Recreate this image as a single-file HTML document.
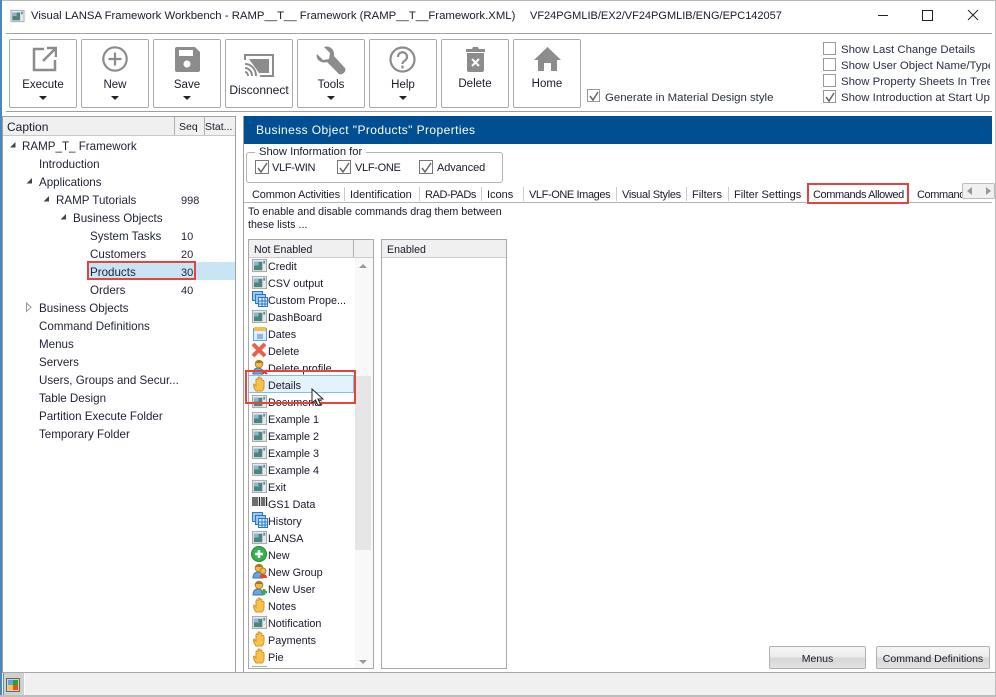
<!DOCTYPE html>
<html><head><meta charset="utf-8"><style>
html,body{margin:0;padding:0;background:#fff}
#w{position:relative;width:996px;height:697px;overflow:hidden;background:#fff;font:12px/16px "Liberation Sans",sans-serif;color:#1a1a2a}
#w div,#w svg{position:absolute}
.t{white-space:nowrap;height:16px}
.tr{font-size:11.600px;color:#1e2233;margin-top:1px}
.n{font-size:11px;color:#1e2233;margin-top:1px}
.tab{font-size:11px;top:187px;letter-spacing:-.4px}
#rows .t{font-size:10.800px;margin-top:1px}
.b{border:1px solid #a9a9a9;border-radius:2px;width:66px;height:67px;top:39px;background:#fff;text-align:center}
.b span{position:absolute;left:0;right:0;line-height:16px;font-size:11.500px}
.c{width:11px;height:11px;border:1px solid #777;background:#fff}
.ar{width:0;height:0;border-left:4px solid transparent;border-right:4px solid transparent;border-top:4px solid #222;left:29px;top:56px}
.red{border:2px solid #e5433d;box-sizing:border-box}
.sep{top:187px;width:1px;height:14px;background:#ccc}
.op{font-size:11.400px;color:#2a3040;margin-top:1px}
.vl{font-size:11px;letter-spacing:-.3px;margin-top:1px}
</style></head><body><div id="w">
<svg width="0" height="0" style="position:absolute"><defs>
<symbol id="doc" viewBox="0 0 16 16"><rect x=".5" y="1.5" width="15" height="13" fill="#e8e8e8" stroke="#a5a5a5"/><rect x="2" y="4" width="9" height="9" fill="#4b8580"/><rect x="2" y="4" width="5" height="4" fill="#8fb5d0"/><rect x="12" y="3" width="2" height="3" fill="#5b8fb0"/></symbol>
<symbol id="hand" viewBox="0 0 16 16"><path d="M4 15C2 12 1 9 2 8l2 2V4c0-1.500 1.500-1.500 2 0V2c0-1.500 2-1.500 2 0v1c.5-1.500 2-1.200 2 .3V5c.5-1 2-.8 2 .5V11c0 2-1 3-2 4z" fill="#f7c34a" stroke="#d89428"/></symbol>
<symbol id="win" viewBox="0 0 16 16"><rect x=".5" y=".5" width="10" height="9" fill="#9cc7ee" stroke="#2a78c8"/><rect x="3.500" y="3.500" width="10" height="9" fill="#9cc7ee" stroke="#2a78c8"/><rect x="6.500" y="6.500" width="9" height="9" fill="#dceeff" stroke="#2a78c8"/><path d="M7 10h8M7 13h8M10 7v8M13 7v8" stroke="#2a78c8"/></symbol>
<symbol id="user" viewBox="0 0 16 16"><path d="M1 15c0-4 2-6 5-6s5 2 5 6z" fill="#6aa6dc" stroke="#3a74ad"/><circle cx="7" cy="5" r="3.800" fill="#f1b94a" stroke="#b27c1f"/><path d="M3.500 4c1-3 6-3 7 0z" fill="#a8741f"/></symbol>
</defs></svg>

<div style="left:0;top:0;width:996px;height:1px;background:#b9b9b9"></div>
<div style="left:0;top:0;width:2px;height:697px;background:#4f86b8"></div>
<div style="left:995px;top:0;width:1px;height:697px;background:#bdbdbd"></div>
<div style="left:0;top:695px;width:996px;height:2px;background:#bdbdbd"></div>

<!-- title -->
<svg style="left:10px;top:9px" width="15" height="14"><use href="#doc" width="15" height="14"/></svg>
<div class="t" style="left:31px;top:8px;font-size:11.350px">Visual LANSA Framework Workbench - RAMP__T__ Framework (RAMP__T__Framework.XML)</div>
<div class="t" style="left:530px;top:8px;font-size:11px">VF24PGMLIB/EX2/VF24PGMLIB/ENG/EPC142057</div>
<div style="left:878px;top:15px;width:10px;height:1px;background:#222"></div>
<div style="left:922px;top:10px;width:9px;height:9px;border:1px solid #222"></div>
<svg style="left:967px;top:9px" width="12" height="12"><path d="M1 1l10 10M11 1L1 11" stroke="#222" fill="none"/></svg>
<div style="left:6px;top:33px;width:986px;height:1px;background:#a0a0a0"></div>
<div style="left:6px;top:111px;width:986px;height:1px;background:#a0a0a0"></div>

<!-- toolbar -->
<div class="b" style="left:9px"><span style="top:37px">Execute</span><div class="ar"></div>
<svg style="left:21px;top:6px" width="26" height="26" fill="none" stroke="#8c8c8c" stroke-width="2.500"><path d="M13 3H3v21h21V14M12 15L24 3M16 2h9v9"/></svg></div>
<div class="b" style="left:81px"><span style="top:37px">New</span><div class="ar"></div>
<svg style="left:20px;top:6px" width="26" height="26" fill="none" stroke="#8c8c8c" stroke-width="2.200"><circle cx="13" cy="13" r="11.700"/><path d="M13 6.500v13M6.500 13h13"/></svg></div>
<div class="b" style="left:153px"><span style="top:37px">Save</span><div class="ar"></div>
<svg style="left:21px;top:7px" width="25" height="25"><path d="M2 0h18l5 5v18a2 2 0 0 1-2 2H2a2 2 0 0 1-2-2V2a2 2 0 0 1 2-2z" fill="#8c8c8c"/><rect x="4" y="3" width="14" height="6" fill="#fff"/><circle cx="12" cy="17" r="3.500" fill="#fff"/></svg></div>
<div class="b" style="left:225px"><span style="top:42px;font-size:12px">Disconnect</span>
<svg style="left:18px;top:13px" width="30" height="25" fill="none" stroke="#8c8c8c" stroke-width="2"><path d="M1 7V2h28v21H16"/><path d="M5 6h20v14H15z" fill="#8c8c8c" stroke="none"/><path d="M1 11c6 0 11 5 11 12M1 15c4 0 7 4 7 8M1 19c2 0 3 2 3 4" stroke-width="2"/></svg></div>
<div class="b" style="left:297px"><span style="top:37px">Tools</span><div class="ar"></div>
<svg style="left:18px;top:6px" width="30" height="30"><path d="M1 8L7 14l6-1 1-6L8 1C13-1 19 3 18 10l11 12c2 3-3 8-6 6L11 16C5 18-1 13 1 8z" fill="#8c8c8c"/></svg></div>
<div class="b" style="left:369px"><span style="top:37px">Help</span><div class="ar"></div>
<svg style="left:19px;top:6px" width="27" height="27" fill="none" stroke="#8c8c8c" stroke-width="2.200"><circle cx="13.500" cy="13.500" r="12"/><path d="M9 11a4.500 4.500 0 1 1 7 3.500c-1.500 1-2.500 2-2.500 3.500"/><path d="M13.500 19.500v3"/></svg></div>
<div class="b" style="left:441px"><span style="top:36px">Delete</span>
<svg style="left:24px;top:7px" width="19" height="25"><path d="M0 2h6l1-2h5l1 2h6v3H0zM1 6h17v17a2 2 0 0 1-2 2H3a2 2 0 0 1-2-2z" fill="#8c8c8c"/><path d="M6 12l7 7M13 12l-7 7" stroke="#fff" stroke-width="2"/></svg></div>
<div class="b" style="left:513px"><span style="top:36px">Home</span>
<svg style="left:20px;top:7px" width="27" height="24"><path d="M13.500 0L27 13h-4v11h-6v-8h-7v8H4V13H0z" fill="#8c8c8c"/></svg></div>

<!-- options -->
<div class="c" style="left:587px;top:89px;border-color:#999"></div>
<svg style="left:588px;top:90px" width="12" height="12"><path d="M2 6l3 4 5-8" fill="none" stroke="#666" stroke-width="1.500"/></svg>
<div class="t op" style="left:605px;top:89px">Generate in Material Design style</div>
<div style="left:823px;top:40px;width:167px;height:66px;overflow:hidden">
<div class="c" style="left:0;top:2px;border-color:#999"></div><div class="t op" style="left:18px;top:1px">Show Last Change Details</div>
<div class="c" style="left:0;top:18px;border-color:#999"></div><div class="t op" style="left:18px;top:17px">Show User Object Name/Type</div>
<div class="c" style="left:0;top:34px;border-color:#999"></div><div class="t op" style="left:18px;top:33px">Show Property Sheets In Tree</div>
<div class="c" style="left:0;top:50px;border-color:#999"></div><svg style="left:1px;top:51px" width="12" height="12"><path d="M2 6l3 4 5-8" fill="none" stroke="#666" stroke-width="1.500"/></svg><div class="t op" style="left:18px;top:49px">Show Introduction at Start Up</div>
</div>

<!-- left tree -->
<div style="left:2px;top:116px;width:1px;height:556px;background:#a0a0a0"></div>
<div style="left:235px;top:116px;width:1px;height:556px;background:#a0a0a0"></div>
<div style="left:3px;top:116px;width:232px;height:20px;background:#f0f0f0;border-top:1px solid #a0a0a0;box-sizing:border-box"></div>
<div style="left:174px;top:117px;width:1px;height:19px;background:#b0b0b0"></div>
<div style="left:204px;top:117px;width:1px;height:19px;background:#b0b0b0"></div>
<div style="left:3px;top:135px;width:232px;height:1px;background:#c8c8c8"></div>
<div class="t" style="left:7px;top:119px">Caption</div>
<div class="t" style="left:179px;top:119px;font-size:10.500px">Seq</div>
<div class="t" style="left:205px;top:119px;font-size:10.500px">Stat...</div>
<div style="left:87px;top:262px;width:148px;height:18px;background:#c9e5f5"></div>
<svg style="left:0;top:0" width="80" height="320" fill="#444"><path d="M10 147.500h5.500v-5.500zM26.500 183.500h5.500v-5.500zM43.500 201.500h5.500v-5.500zM60.500 219.500h5.500v-5.500z"/><path d="M26.500 303v8.500l4.500-4.250z" fill="#fff" stroke="#999"/></svg>
<div class="t tr" style="left:22px;top:138px">RAMP_T_ Framework</div>
<div class="t tr" style="left:39px;top:156px">Introduction</div>
<div class="t tr" style="left:39px;top:174px">Applications</div>
<div class="t tr" style="left:56px;top:192px">RAMP Tutorials</div><div class="t n" style="left:181px;top:192px">998</div>
<div class="t tr" style="left:73px;top:210px">Business Objects</div>
<div class="t tr" style="left:90px;top:228px">System Tasks</div><div class="t n" style="left:181px;top:228px">10</div>
<div class="t tr" style="left:90px;top:246px">Customers</div><div class="t n" style="left:181px;top:246px">20</div>
<div class="t tr" style="left:90px;top:264px">Products</div><div class="t n" style="left:181px;top:264px">30</div>
<div class="t tr" style="left:90px;top:282px">Orders</div><div class="t n" style="left:181px;top:282px">40</div>
<div class="t tr" style="left:39px;top:300px">Business Objects</div>
<div class="t tr" style="left:39px;top:318px">Command Definitions</div>
<div class="t tr" style="left:39px;top:336px">Menus</div>
<div class="t tr" style="left:39px;top:354px">Servers</div>
<div class="t tr" style="left:39px;top:372px">Users, Groups and Secur...</div>
<div class="t tr" style="left:39px;top:390px">Table Design</div>
<div class="t tr" style="left:39px;top:408px">Partition Execute Folder</div>
<div class="t tr" style="left:39px;top:426px">Temporary Folder</div>
<div class="red" style="left:87px;top:261px;width:109px;height:19px"></div>

<!-- right header -->
<div style="left:243px;top:116px;width:1px;height:556px;background:#a0a0a0"></div>
<div style="left:244px;top:116px;width:748px;height:28px;background:#004f93"></div>
<div class="t" style="left:256px;top:122px;color:#fff;letter-spacing:.035em">Business Object "Products" Properties</div>
<div style="left:246px;top:152px;width:255px;height:29px;border:1px solid #b4b4b4;border-radius:3px"></div>
<div class="t" style="left:255px;top:144px;background:#fff;padding:0 4px;font-size:11.200px">Show Information for</div>
<div class="c" style="left:255px;top:160px;width:12px;height:12px"></div><svg style="left:256px;top:161px" width="13" height="13"><path d="M2 7l3 4 6-9" fill="none" stroke="#666" stroke-width="1.500"/></svg><div class="t vl" style="left:272px;top:159px">VLF-WIN</div>
<div class="c" style="left:337px;top:160px;width:12px;height:12px"></div><svg style="left:338px;top:161px" width="13" height="13"><path d="M2 7l3 4 6-9" fill="none" stroke="#666" stroke-width="1.500"/></svg><div class="t vl" style="left:355px;top:159px">VLF-ONE</div>
<div class="c" style="left:419px;top:160px;width:12px;height:12px"></div><svg style="left:420px;top:161px" width="13" height="13"><path d="M2 7l3 4 6-9" fill="none" stroke="#666" stroke-width="1.500"/></svg><div class="t vl" style="left:437px;top:159px;letter-spacing:-.1px">Advanced</div>

<!-- tabs -->
<div style="left:244px;top:202px;width:748px;height:1px;background:#b4b4b4"></div>
<div class="t tab" style="left:252px;letter-spacing:-.15px">Common Activities</div>
<div class="t tab" style="left:350px;letter-spacing:0">Identification</div>
<div class="t tab" style="left:425px">RAD-PADs</div>
<div class="t tab" style="left:487px;letter-spacing:0">Icons</div>
<div class="t tab" style="left:529px">VLF-ONE Images</div>
<div class="t tab" style="left:622px;letter-spacing:-.3px">Visual Styles</div>
<div class="t tab" style="left:692px;letter-spacing:0">Filters</div>
<div class="t tab" style="left:734px;letter-spacing:0">Filter Settings</div>
<div class="t tab" style="left:813px">Commands Allowed</div>
<div style="left:917px;top:187px;width:46px;height:16px;overflow:hidden"><div class="t" style="left:0;top:0;font-size:11px;letter-spacing:-.4px">Commands</div></div>
<div class="sep" style="left:344px"></div>
<div class="sep" style="left:419px"></div>
<div class="sep" style="left:481px"></div>
<div class="sep" style="left:523px"></div>
<div class="sep" style="left:616px"></div>
<div class="sep" style="left:686px"></div>
<div class="sep" style="left:728px"></div>
<div class="red" style="left:807px;top:183px;width:102px;height:21px"></div>
<div style="left:962px;top:183px;width:33px;height:16px;background:#f0f0f0;border:1px solid #bbb;border-radius:2px;box-sizing:border-box"></div>
<svg style="left:966px;top:186px" width="26" height="10" fill="#999"><path d="M6 1v8L1 5zM20 1v8l5-4z"/></svg>

<div class="t" style="left:248px;top:204px;font-size:10.700px">To enable and disable commands drag them between</div>
<div class="t" style="left:248px;top:217px;font-size:10.700px">these lists ...</div>

<!-- lists -->
<div style="left:248px;top:239px;width:124px;height:428px;border:1px solid #a8a8a8;overflow:hidden">
<div style="left:0;top:0;width:124px;height:17px;background:#f0f0f0;border-bottom:1px solid #ccc"></div>
<div style="left:104px;top:0;width:1px;height:17px;background:#b0b0b0"></div>
<div class="t" style="left:5px;top:2px;font-size:10.600px">Not Enabled</div>
<div style="left:106px;top:18px;width:18px;height:410px;background:#f8f8f8"></div>
<div style="left:106px;top:136px;width:16px;height:174px;background:#e6e6e6"></div>
<svg style="left:107px;top:22px" width="14" height="404" fill="#999"><path d="M3 6l4-4 4 4zM3 398l4 4 4-4z"/></svg>
</div>
<div style="left:249px;top:257px;width:105px;height:410px;overflow:hidden" id="rows">
<div style="left:-1px;top:118px;width:106px;height:18px;background:#e3f2fb;border:1px solid #7fc0e8;box-sizing:border-box"></div>
<svg style="left:3px;top:1px" width="15" height="15"><use href="#doc" width="15" height="15"/></svg><div class="t" style="left:19px;top:1px">Credit</div>
<svg style="left:3px;top:18px" width="15" height="15"><use href="#doc" width="15" height="15"/></svg><div class="t" style="left:19px;top:18px">CSV output</div>
<svg style="left:3px;top:34px" width="16" height="16"><use href="#win" width="16" height="16"/></svg><div class="t" style="left:19px;top:35px">Custom Prope...</div>
<svg style="left:3px;top:52px" width="15" height="15"><use href="#doc" width="15" height="15"/></svg><div class="t" style="left:19px;top:52px">DashBoard</div>
<svg style="left:3px;top:69px" width="16" height="16"><rect x="1.500" y="2.500" width="13" height="12" fill="#dceeff" stroke="#5fa3dc"/><rect x="2" y="1" width="12" height="4" fill="#f4c04a"/><rect x="5" y="8" width="6" height="5" fill="#8bb8e0"/></svg><div class="t" style="left:19px;top:69px">Dates</div>
<svg style="left:2px;top:85px" width="16" height="16"><path d="M2 2l12 12M14 2L2 14" stroke="#e8604c" stroke-width="4"/></svg><div class="t" style="left:19px;top:86px">Delete</div>
<svg style="left:3px;top:102px" width="16" height="16"><use href="#user" width="16" height="16"/><path d="M10 11l5 4M15 11l-5 4" stroke="#d33" stroke-width="2"/></svg><div class="t" style="left:19px;top:103px">Delete profile</div>
<svg style="left:3px;top:119px" width="16" height="16"><use href="#hand" width="16" height="16"/></svg><div class="t" style="left:19px;top:120px">Details</div>
<svg style="left:3px;top:137px" width="15" height="15"><use href="#doc" width="15" height="15"/></svg><div class="t" style="left:19px;top:137px">Documents</div>
<svg style="left:3px;top:154px" width="15" height="15"><use href="#doc" width="15" height="15"/></svg><div class="t" style="left:19px;top:154px">Example 1</div>
<svg style="left:3px;top:171px" width="15" height="15"><use href="#doc" width="15" height="15"/></svg><div class="t" style="left:19px;top:171px">Example 2</div>
<svg style="left:3px;top:188px" width="15" height="15"><use href="#doc" width="15" height="15"/></svg><div class="t" style="left:19px;top:188px">Example 3</div>
<svg style="left:3px;top:205px" width="15" height="15"><use href="#doc" width="15" height="15"/></svg><div class="t" style="left:19px;top:205px">Example 4</div>
<svg style="left:3px;top:222px" width="15" height="15"><use href="#doc" width="15" height="15"/></svg><div class="t" style="left:19px;top:222px">Exit</div>
<svg style="left:3px;top:239px" width="16" height="13"><path d="M1 1v9M3 1v9M5 1v9M7.500 1v9M10 1v9M12 1v9M14.500 1v9" stroke="#222" stroke-width="1.300"/></svg><div class="t" style="left:19px;top:239px">GS1 Data</div>
<svg style="left:3px;top:255px" width="16" height="16"><use href="#win" width="16" height="16"/></svg><div class="t" style="left:19px;top:256px">History</div>
<svg style="left:3px;top:273px" width="15" height="15"><use href="#doc" width="15" height="15"/></svg><div class="t" style="left:19px;top:273px">LANSA</div>
<svg style="left:2px;top:289px" width="16" height="16"><circle cx="8" cy="8" r="7.500" fill="#36b24a" stroke="#1f8a33"/><path d="M8 4v8M4 8h8" stroke="#fff" stroke-width="2.500"/></svg><div class="t" style="left:19px;top:290px">New</div>
<svg style="left:3px;top:306px" width="16" height="16"><use href="#user" width="16" height="16"/><circle cx="11" cy="8" r="3" fill="#f1b94a" stroke="#b27c1f"/><path d="M8 15c0-3 1-4 3-4s4 1 4 4z" fill="#d64a3a"/></svg><div class="t" style="left:19px;top:307px">New Group</div>
<svg style="left:3px;top:323px" width="16" height="16"><use href="#user" width="16" height="16"/><path d="M12 9v6M9 12h6" stroke="#3aaa4a" stroke-width="2.500"/></svg><div class="t" style="left:19px;top:324px">New User</div>
<svg style="left:3px;top:340px" width="16" height="16"><use href="#hand" width="16" height="16"/></svg><div class="t" style="left:19px;top:341px">Notes</div>
<svg style="left:3px;top:358px" width="15" height="15"><use href="#doc" width="15" height="15"/></svg><div class="t" style="left:19px;top:358px">Notification</div>
<svg style="left:3px;top:374px" width="16" height="16"><use href="#hand" width="16" height="16"/></svg><div class="t" style="left:19px;top:375px">Payments</div>
<svg style="left:3px;top:391px" width="16" height="16"><use href="#hand" width="16" height="16"/></svg><div class="t" style="left:19px;top:392px">Pie</div>
<svg style="left:3px;top:408px" width="15" height="15"><use href="#doc" width="15" height="15"/></svg>
</div>
<div class="red" style="left:245px;top:370px;width:111px;height:34px"></div>
<svg style="left:311px;top:388px" width="13" height="19"><path d="M1 1v14l3.500-3 2.500 5.500 2.500-1-2.500-5.500h5z" fill="#fff" stroke="#222"/></svg>

<div style="left:381px;top:239px;width:124px;height:428px;border:1px solid #a8a8a8">
<div style="left:0;top:0;width:124px;height:17px;background:#f0f0f0;border-bottom:1px solid #ccc"></div>
<div class="t" style="left:5px;top:2px;font-size:10.600px">Enabled</div>
</div>

<!-- bottom buttons -->
<div style="left:769px;top:646px;width:95px;height:21px;border:1px solid #b0b0b0;border-radius:2px;background:linear-gradient(#f6f6f6,#ececec 45%,#d6d6d6 55%,#e4e4e4);text-align:center;line-height:24px;font-size:10.500px">Menus</div>
<div style="left:876px;top:646px;width:112px;height:21px;border:1px solid #b0b0b0;border-radius:2px;background:linear-gradient(#f6f6f6,#ececec 45%,#d6d6d6 55%,#e4e4e4);text-align:center;line-height:24px;font-size:10.500px">Command Definitions</div>

<!-- status -->
<div style="left:2px;top:672px;width:993px;height:1px;background:#a8a8a8"></div>
<div style="left:2px;top:673px;width:993px;height:22px;background:#f0f0f0"></div>
<div style="left:3px;top:673px;width:20px;height:22px;background:#d0d0d0;border-left:1px solid #5b93c4;border-right:1px solid #fff"></div>
<svg style="left:6px;top:678px" width="14" height="14"><rect x=".5" y=".5" width="13" height="13" fill="none" stroke="#666"/><rect x="2" y="2" width="5" height="5" fill="#5aa5f0"/><rect x="7" y="2" width="5" height="5" fill="#1fa82c"/><rect x="2" y="7" width="5" height="5" fill="#f7c84a"/><rect x="7" y="7" width="5" height="5" fill="#f0500f"/></svg>
</div></body></html>
